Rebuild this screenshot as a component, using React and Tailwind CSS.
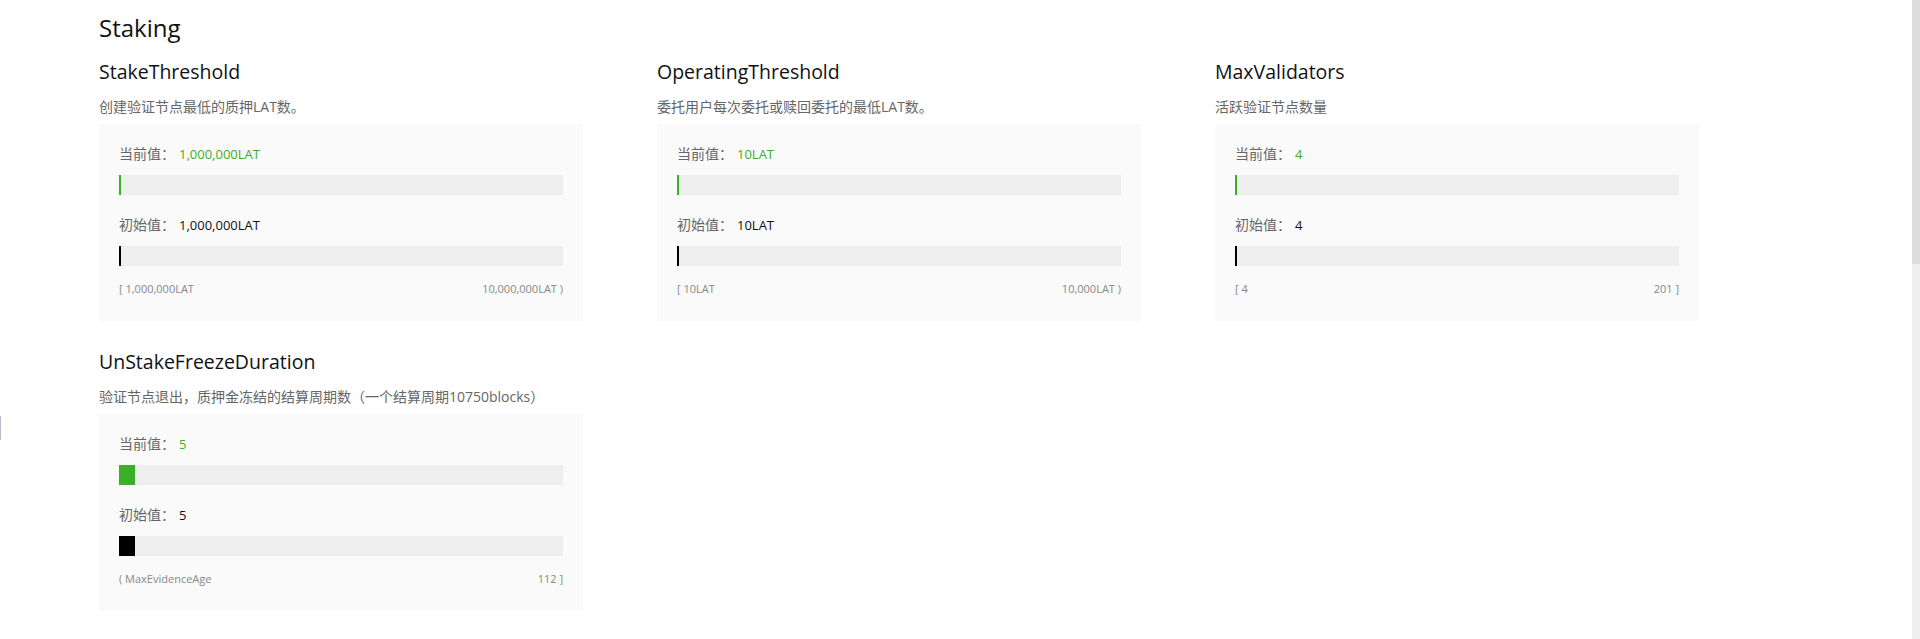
import React from "react";

const params = [
  {
    name: "StakeThreshold",
    desc: "创建验证节点最低的质押LAT数。",
    current: "1,000,000LAT",
    initial: "1,000,000LAT",
    fill: 2,
    left: "[ 1,000,000LAT",
    right: "10,000,000LAT )",
  },
  {
    name: "OperatingThreshold",
    desc: "委托用户每次委托或赎回委托的最低LAT数。",
    current: "10LAT",
    initial: "10LAT",
    fill: 2,
    left: "[ 10LAT",
    right: "10,000LAT )",
  },
  {
    name: "MaxValidators",
    desc: "活跃验证节点数量",
    current: "4",
    initial: "4",
    fill: 2,
    left: "[ 4",
    right: "201 ]",
  },
  {
    name: "UnStakeFreezeDuration",
    desc: "验证节点退出，质押金冻结的结算周期数（一个结算周期10750blocks）",
    current: "5",
    initial: "5",
    fill: 16,
    left: "( MaxEvidenceAge",
    right: "112 ]",
  },
];

function Bar({ fill, color }) {
  return (
    <div className="mt-[11px] h-5 bg-[#eeeeee]">
      <div className={`h-5 ${color}`} style={{ width: fill }} />
    </div>
  );
}

function ParamCard({ p }) {
  return (
    <div className="flex flex-col">
      <h3 className="text-[19.5px] leading-7 text-[#111]">{p.name}</h3>
      <p className="mt-[10px] text-[14px] leading-[22px] text-[#666]">{p.desc}</p>
      <div className="mt-[6px] bg-[#fafafa] px-5 pt-5 pb-6">
        <div className="text-[14px] leading-5 text-[#666]">
          当前值：<span className="ml-[4px] text-[13px] text-[#3cae27]">{p.current}</span>
        </div>
        <Bar fill={p.fill} color="bg-[#3cae27]" />
        <div className="mt-5 text-[14px] leading-5 text-[#666]">
          初始值：<span className="ml-[4px] text-[13px] text-[#111]">{p.initial}</span>
        </div>
        <Bar fill={p.fill} color="bg-black" />
        <div className="mt-[15px] flex justify-between text-[11px] leading-4 text-[#888]">
          <span>{p.left}</span>
          <span>{p.right}</span>
        </div>
      </div>
    </div>
  );
}

export default function App() {
  return (
    <div className="relative h-[639px] w-full overflow-hidden bg-white font-['Open_Sans','Noto_Sans_CJK_SC',sans-serif]">
      <div className="absolute left-0 top-[416px] h-6 w-px bg-[#b8bccc]" />
      <div className="absolute right-0 top-0 h-full w-2 bg-[#eeeeee]">
        <div className="h-[264px] w-2 bg-[#dddddd]" />
      </div>
      <div className="pl-[99px] pt-3">
        <h2 className="text-[24px] leading-8 text-[#111]">Staking</h2>
        <div className="mt-[14px] grid grid-cols-[repeat(3,484px)] gap-x-[74px] gap-y-[27px]">
          {params.map((p) => (
            <ParamCard key={p.name} p={p} />
          ))}
        </div>
      </div>
    </div>
  );
}
